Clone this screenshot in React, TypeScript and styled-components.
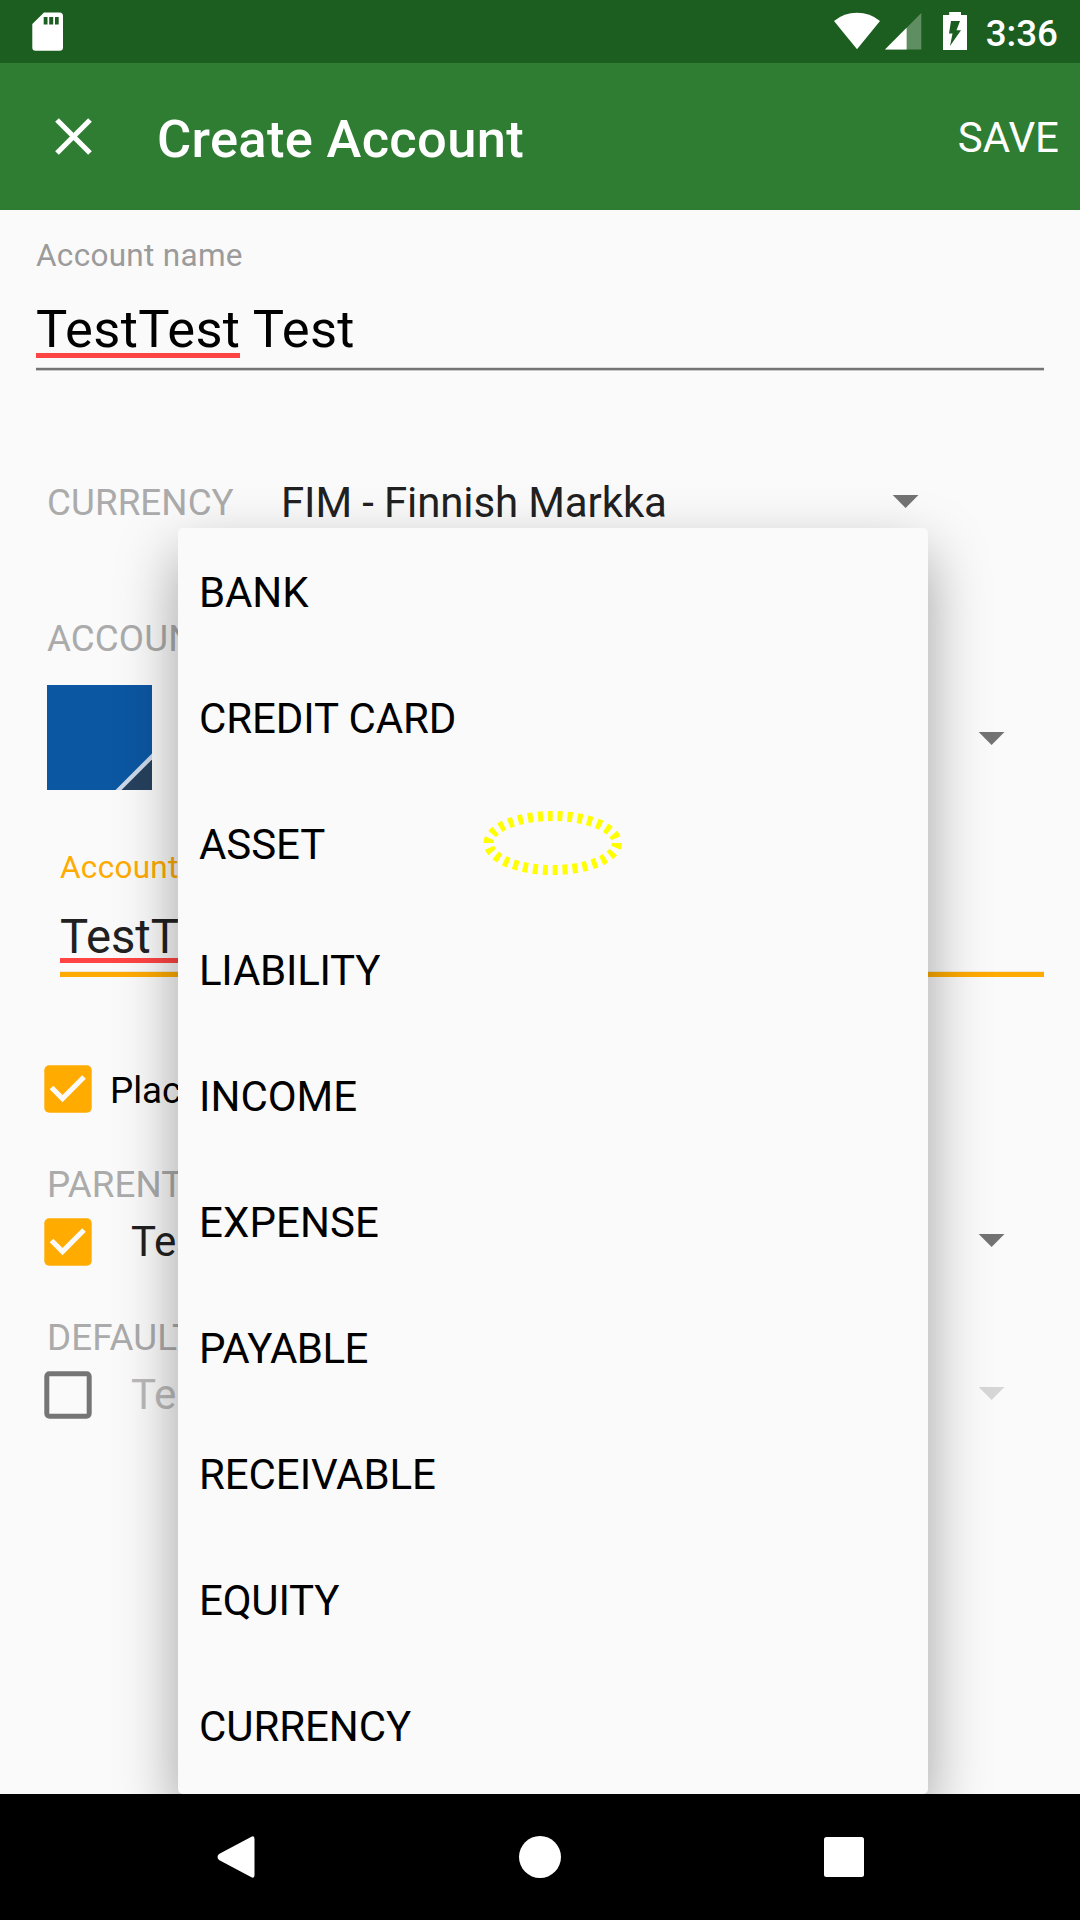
import React from "react";
import styled, { createGlobalStyle } from "styled-components";

const GlobalStyle = createGlobalStyle`
  * { box-sizing: border-box; }
  body { margin: 0; background: #fafafa; }
`;

const Screen = styled.div`
  position: relative;
  display: flex;
  flex-direction: column;
  width: 1080px;
  height: 1920px;
  overflow: hidden;
  background: #fafafa;
  color: #212121;
  font-family: Roboto, "Liberation Sans", sans-serif;
`;

const StatusBar = styled.header`
  display: flex;
  align-items: flex-start;
  height: 63px;
  padding: 12px 21px 0 32px;
  background: #1b5e20;
  svg { display: block; flex: none; }
`;

const StatusIcons = styled.div`
  display: flex;
  margin-left: auto;
`;

const SignalIcon = styled.svg`
  margin-left: 5px;
`;

const BatteryIcon = styled.svg`
  margin-left: 21px;
`;

const Clock = styled.span`
  width: 73px;
  margin: 1px 1px 0 18px;
  color: #fff;
  font-size: 36.75px;
  font-weight: 500;
  line-height: 41px;
  text-align: right;
  white-space: nowrap;
`;

const Toolbar = styled.div`
  display: flex;
  align-items: center;
  height: 147px;
  padding: 0 21px 0 55px;
  background: #2e7d32;
  color: #fff;
`;

const CloseButton = styled.button`
  display: flex;
  padding: 0;
  border: 0;
  background: none;
`;

const Title = styled.h1`
  margin: 5px 0 0 65px;
  font-size: 52.5px;
  font-weight: 500;
  letter-spacing: 0.3px;
  line-height: 60px;
  white-space: nowrap;
`;

const SaveButton = styled.button`
  margin: 2px 0 0 auto;
  padding: 0;
  border: 0;
  background: none;
  color: inherit;
  font: 400 42px/50px Roboto, "Liberation Sans", sans-serif;
`;

const Form = styled.main`
  display: flex;
  flex: 1;
  flex-direction: column;
  align-items: stretch;
  min-height: 0;
  padding: 25px 36px 0;
`;

const Field = styled.div<{ $focused?: boolean }>`
  display: flex;
  flex-direction: column;
  align-items: flex-start;
  margin: ${(p) => (p.$focused ? "57px 0 0 24px" : "0")};
`;

const FieldLabel = styled.label<{ $focused?: boolean }>`
  height: 40px;
  color: ${(p) => (p.$focused ? "#ffab00" : "#9b9b9b")};
  font-size: 31.5px;
  letter-spacing: 0.3px;
  line-height: 42px;
`;

const FieldValue = styled.div<{ $focused?: boolean }>`
  margin-top: ${(p) => (p.$focused ? 29 : 30)}px;
  color: ${(p) => (p.$focused ? "#212121" : "#000")};
  font-size: ${(p) => (p.$focused ? 47.25 : 52.5)}px;
  letter-spacing: ${(p) => (p.$focused ? 0 : 0.32)}px;
  line-height: ${(p) => (p.$focused ? 42 : 48)}px;
  white-space: pre;
`;

const Misspelled = styled.span`
  display: inline-block;
  border-bottom: 5px solid #ff4444;
`;

const Rule = styled.div<{ $focused?: boolean }>`
  align-self: stretch;
  height: ${(p) => (p.$focused ? 6 : 4)}px;
  margin-top: ${(p) => (p.$focused ? 8 : 9)}px;
  background: ${(p) =>
    p.$focused
      ? "linear-gradient(#f0e8d8 1px, #ffab00 1px)"
      : "linear-gradient(#dcdcdc 1px, #747474 1px 3px, #c8c8c8 3px)"};
`;

const CurrencyRow = styled.div`
  display: flex;
  align-items: center;
  height: 51px;
  margin: 106px 0 0 11px;
`;

const Caption = styled.div<{ $top?: number }>`
  height: 50px;
  margin: ${(p) => (p.$top ? `${p.$top}px 0 0 11px` : "0")};
  color: #ababab;
  font-size: 36.75px;
  letter-spacing: 0.08px;
  line-height: 52px;
  white-space: nowrap;
`;

const CurrencyCaption = styled(Caption)`
  width: 234px;
  line-height: 50px;
`;

const SpinnerText = styled.span<{ $disabled?: boolean }>`
  color: ${(p) => (p.$disabled ? "#bbbbbb" : "#212121")};
  font-size: 42px;
  letter-spacing: -0.12px;
  line-height: 48px;
  white-space: nowrap;
`;

const Arrow = styled.svg<{ $right: number; $lift: number; $disabled?: boolean }>`
  display: block;
  flex: none;
  margin: 0 ${(p) => p.$right}px ${(p) => p.$lift}px auto;
  fill: ${(p) => (p.$disabled ? "#d6d6d6" : "#737373")};
`;

const TypeRow = styled.div`
  display: flex;
  align-items: center;
  height: 106px;
  margin: 22px 0 -1px 11px;
`;

const Swatch = styled.svg`
  display: block;
  flex: none;
  margin: 0 29px 1px 0;
`;

const CheckRow = styled.div<{ $top: number }>`
  display: flex;
  align-items: center;
  height: 48px;
  margin: ${(p) => p.$top}px 0 0 8px;
`;

const CheckGlyph = styled.svg<{ $gap: number }>`
  display: block;
  flex: none;
  margin-right: ${(p) => p.$gap}px;
`;

const CheckLabel = styled.span`
  margin-top: 4px;
  color: #000;
  font-size: 36.75px;
  line-height: 44px;
  white-space: nowrap;
`;

const Menu = styled.ul`
  position: absolute;
  top: 528px;
  left: 178px;
  width: 750px;
  height: 1266px;
  margin: 0;
  padding: 1px 0 5px;
  border-radius: 5px;
  background: #fafafa;
  box-shadow: 0 25px 60px rgba(0, 0, 0, 0.36);
  list-style: none;
`;

const MenuItem = styled.li<{ $tracking: number }>`
  height: 126px;
  padding-left: 21px;
  color: #000;
  font-size: 42px;
  letter-spacing: ${(p) => p.$tracking}px;
  line-height: 127px;
`;

const TapMarker = styled.svg`
  position: absolute;
  top: 810px;
  left: 482px;
`;

const NavBar = styled.nav`
  position: relative;
  display: flex;
  align-items: center;
  justify-content: space-between;
  height: 126px;
  padding: 0 216px;
  background: #000;
  svg { display: block; fill: #fff; }
`;

const Spinner = ({ right, lift, disabled }: { right: number; lift: number; disabled?: boolean }) => (
  <Arrow $right={right} $lift={lift} $disabled={disabled} width="27" height="13" viewBox="0 0 27 13">
    <path d="M.7 0H26.500L13.600 13z" />
  </Arrow>
);

const Check = ({ checked, gap }: { checked?: boolean; gap: number }) => (
  <CheckGlyph $gap={gap} width="48" height="48" viewBox="0 0 48 48">
    {checked ? (
      <>
        <rect x="0.3" y="0.3" width="47.4" height="47.4" rx="5" fill="#ffab00" />
        <path d="M7.5 22.5L18.5 33.5L40 12" fill="none" stroke="#fafafa" strokeWidth="5.2" />
      </>
    ) : (
      <rect x="2.8" y="2.8" width="42.4" height="42.4" rx="2.6" fill="none" stroke="#757575" strokeWidth="5" />
    )}
  </CheckGlyph>
);

const accountTypes = [
  { name: "BANK", tracking: -0.1 },
  { name: "CREDIT CARD", tracking: -0.1 },
  { name: "ASSET", tracking: -0.1 },
  { name: "LIABILITY", tracking: -0.25 },
  { name: "INCOME", tracking: 0 },
  { name: "EXPENSE", tracking: 0.1 },
  { name: "PAYABLE", tracking: -0.5 },
  { name: "RECEIVABLE", tracking: -0.08 },
  { name: "EQUITY", tracking: -0.2 },
  { name: "CURRENCY", tracking: -0.08 },
];

export default function App() {
  return (
    <Screen>
      <GlobalStyle />
      <StatusBar>
        <svg width="31" height="39" viewBox="0 0 31 39">
          <path
            fill="#fff"
            fillRule="evenodd"
            d="M12 .5H27.5Q31 .5 31 4V35.500Q31 38.700 27.500 38.700H3.500Q.3 38.700 .3 35.500V12zM11.700 5V12.500H15.500V5zM17.200 5V12.500H21.200V5zM23 5V12.500H26.700V5z"
          />
        </svg>
        <StatusIcons>
          <svg width="46" height="38" viewBox="0 0 46 38">
            <path fill="#fff" d="M0 9Q10 .8 23 .8T46 9L23 37.300z" />
          </svg>
          <SignalIcon width="37" height="38" viewBox="0 0 37 38">
            <path fill="#fff" fillOpacity=".3" d="M36.300 1V37.600H0z" />
            <path fill="#fff" d="M21.600 15.800V37.600H0z" />
          </SignalIcon>
          <BatteryIcon width="24" height="38" viewBox="0 0 24 38">
            <path
              fill="#fff"
              fillRule="evenodd"
              d="M6.200 0H18V3H24V38H0V3H6.200zM8 9L6 21.500H9.500L7 34L18 18.200H13.500L17 9z"
            />
          </BatteryIcon>
          <Clock>3:36</Clock>
        </StatusIcons>
      </StatusBar>
      <Toolbar>
        <CloseButton aria-label="Close">
          <svg width="37" height="37" viewBox="0 0 37 37">
            <path d="M2 2L35 35M35 2L2 35" stroke="#fff" strokeWidth="5.200" />
          </svg>
        </CloseButton>
        <Title>Create Account</Title>
        <SaveButton>SAVE</SaveButton>
      </Toolbar>
      <Form>
        <Field>
          <FieldLabel>Account name</FieldLabel>
          <FieldValue>
            <Misspelled>TestTest</Misspelled> Test
          </FieldValue>
          <Rule />
        </Field>
        <CurrencyRow>
          <CurrencyCaption>CURRENCY</CurrencyCaption>
          <SpinnerText>FIM - Finnish Markka</SpinnerText>
          <Spinner right={125} lift={2} />
        </CurrencyRow>
        <Caption $top={85}>ACCOUNT COLOR &amp; TYPE</Caption>
        <TypeRow>
          <Swatch width="105" height="105" viewBox="0 0 105 105">
            <path fill="#0c57a2" d="M0 0H105V105H0z" />
            <path fill="#26415e" d="M105 72V105H72z" />
            <path fill="#cbd9e9" d="M105 68.500V74.500L74.500 105H68.500z" />
          </Swatch>
          <Spinner right={39} lift={-1} />
        </TypeRow>
        <Field $focused>
          <FieldLabel $focused>Account description</FieldLabel>
          <FieldValue $focused>
            <Misspelled>TestTest</Misspelled> Test
          </FieldValue>
          <Rule $focused />
        </Field>
        <CheckRow $top={88}>
          <Check checked gap={18} />
          <CheckLabel>Placeholder account</CheckLabel>
        </CheckRow>
        <Caption $top={46}>PARENT ACCOUNT</Caption>
        <CheckRow $top={9}>
          <Check checked gap={39} />
          <SpinnerText>Test</SpinnerText>
          <Spinner right={39} lift={3} />
        </CheckRow>
        <Caption $top={46}>DEFAULT TRANSFER ACCOUNT</Caption>
        <CheckRow $top={9}>
          <Check gap={39} />
          <SpinnerText $disabled>Test</SpinnerText>
          <Spinner right={39} lift={3} disabled />
        </CheckRow>
      </Form>
      <Menu>
        {accountTypes.map(({ name, tracking }) => (
          <MenuItem key={name} $tracking={tracking}>
            {name}
          </MenuItem>
        ))}
      </Menu>
      <TapMarker width="142" height="66" viewBox="0 0 142 66">
        <path
          d="M6.500 33A64.200 27 0 0 1 134.900 33A64.200 27 0 0 1 6.500 33"
          fill="none"
          stroke="#ff0"
          strokeWidth="10"
          strokeDasharray="5 5"
          pathLength="300"
        />
      </TapMarker>
      <NavBar>
        <svg width="40" height="44" viewBox="0 0 40 44">
          <path d="M38.500 4V40Q38.500 44 35 42L3 25Q0 22 3 19L35 2Q38.500 0 38.500 4z" />
        </svg>
        <svg width="42" height="42" viewBox="0 0 42 42">
          <circle cx="21" cy="21" r="21" />
        </svg>
        <svg width="40" height="40" viewBox="0 0 40 40">
          <rect width="40" height="40" rx="2.500" />
        </svg>
      </NavBar>
    </Screen>
  );
}
